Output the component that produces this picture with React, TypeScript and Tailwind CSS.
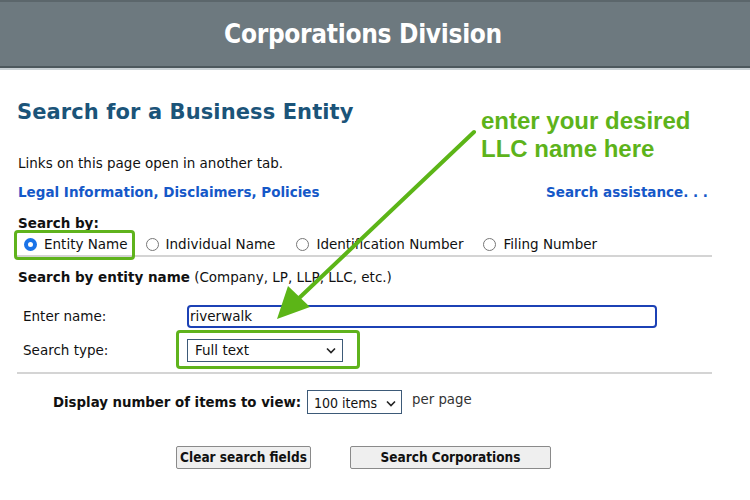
import React from "react";

const verdana = { fontFamily: '"DejaVu Sans", Verdana, sans-serif' };
const condensed = { fontFamily: '"DejaVu Sans Condensed", "Liberation Sans Narrow", sans-serif' };

function Radio({ checked }: { checked?: boolean }) {
  return checked ? (
    <span className="inline-block w-[13px] h-[13px] rounded-full border-[4px] border-[#1a73e8] bg-white box-border" />
  ) : (
    <span className="inline-block w-[13px] h-[13px] rounded-full border border-[#777] bg-white box-border" />
  );
}

function Chevron() {
  return (
    <svg width="10" height="7" viewBox="0 0 10 7">
      <path d="M1 1.5 L5 5.5 L9 1.5" fill="none" stroke="#222" strokeWidth="1.6" />
    </svg>
  );
}

export default function App() {
  return (
    <div className="relative w-[750px] h-[500px] bg-white overflow-hidden text-[#111]" style={verdana}>
      {/* header */}
      <div className="h-[68px] bg-[#6d797f] border-t-2 border-t-[#5b666b] border-b-2 border-b-[#4d585d] flex items-center justify-center">
        <div className="text-white text-[26px] font-bold tracking-[-0.3px] pr-[24px]" style={condensed}>
          Corporations Division
        </div>
      </div>
      <div className="h-[2px] bg-[#c9d1d5]" />

      <div className="pl-[17px] w-[712px]">
        <div className="mt-[31px] h-[24px] flex items-center text-[21px] font-bold text-[#1b5479] tracking-[0.1px]">
          Search for a Business Entity
        </div>
        <div className="mt-[28px] h-[20px] flex items-center text-[13.5px] pl-[1px]">
          Links on this page open in another tab.
        </div>
        <div className="mt-[9px] h-[20px] flex items-center justify-between text-[13.5px] font-bold text-[#1558c8]">
          <span className="pl-[1px]">Legal Information, Disclaimers, Policies</span>
          <span className="pr-[4px]">Search assistance. . .</span>
        </div>
        <div className="mt-[12px] h-[18px] flex items-center text-[13.5px] font-bold pl-[1px]">Search by:</div>
        <div className="mt-[1px] h-[24px] flex items-center text-[13.5px] border-b-2 border-[#d4d4d4]">
          <label className="flex items-center gap-[7px] ml-[7px]">
            <Radio checked /> <span>Entity Name</span>
          </label>
          <label className="flex items-center gap-[7px] ml-[18px]">
            <Radio /> <span>Individual Name</span>
          </label>
          <label className="flex items-center gap-[7px] ml-[21px]">
            <Radio /> <span>Identification Number</span>
          </label>
          <label className="flex items-center gap-[7px] ml-[20px]">
            <Radio /> <span>Filing Number</span>
          </label>
        </div>
        <div className="mt-[10px] h-[20px] flex items-center text-[13.5px] pl-[1px]">
          <span className="font-bold">Search by entity name</span>
          <span>&nbsp;(Company, LP, LLP, LLC, etc.)</span>
        </div>

        <div className="mt-[18px] h-[23px] flex items-center text-[13.5px]">
          <span className="w-[170px] pl-[6px]">Enter name:</span>
          <div className="w-[470px] h-[23px] border-2 border-[#1c41b5] rounded-[4px] flex items-center pl-[1px] text-[13.5px]">
            riverwalk
          </div>
        </div>
        <div className="mt-[11px] h-[23px] flex items-center text-[13.5px]">
          <span className="w-[170px] pl-[6px]">Search type:</span>
          <div className="w-[156px] h-[23px] border border-[#3d5a78] flex items-center justify-between pl-[7px] pr-[6px] text-[13.5px]">
            <span>Full text</span>
            <Chevron />
          </div>
        </div>
        <div className="mt-[10px] border-b-2 border-[#d4d4d4]" />

        <div className="mt-[16px] h-[24px] flex items-center text-[14.8px] pl-[36px]" style={condensed}>
          <span className="font-bold">Display number of items to view:</span>
          <div className="ml-[6px] w-[95px] h-[24px] border border-[#3d5a78] flex items-center justify-between pl-[6px] pr-[5px] text-[14px] pt-[2px]">
            <span>100 items</span>
            <Chevron />
          </div>
          <span className="ml-[10px] text-[#333] -mt-[6px]">per page</span>
        </div>

        <div className="mt-[32px] flex items-center text-[13.5px] font-bold" style={condensed}>
          <button className="ml-[159px] w-[135px] h-[23px] bg-[#efefef] border border-[#8a8a8a] rounded-[2px] flex items-center justify-center">
            Clear search fields
          </button>
          <button className="ml-[39px] w-[201px] h-[23px] bg-[#efefef] border border-[#8a8a8a] rounded-[2px] flex items-center justify-center">
            Search Corporations
          </button>
        </div>
      </div>

      {/* annotation overlays */}
      <div className="absolute left-[14px] top-[230px] w-[121px] h-[30px] border-[3px] border-[#5fb31c] rounded-[4px]" />
      <div className="absolute left-[176px] top-[330px] w-[184px] h-[39px] border-[3px] border-[#5fb31c] rounded-[4px]" />
      <div
        className="absolute left-[481px] top-[107px] text-[24px] leading-[28px] font-bold text-[#5db31b]"
        style={{ fontFamily: '"Liberation Sans", Arial, sans-serif' }}
      >
        enter your desired
        <br />
        LLC name here
      </div>
      <svg className="absolute left-0 top-0" width="750" height="500" viewBox="0 0 750 500">
        <line x1="474" y1="132" x2="296" y2="301" stroke="#5cb517" strokeWidth="4" strokeLinecap="round" />
        <polygon points="277,319 288,286 310,307" fill="#5cb517" />
      </svg>
    </div>
  );
}
